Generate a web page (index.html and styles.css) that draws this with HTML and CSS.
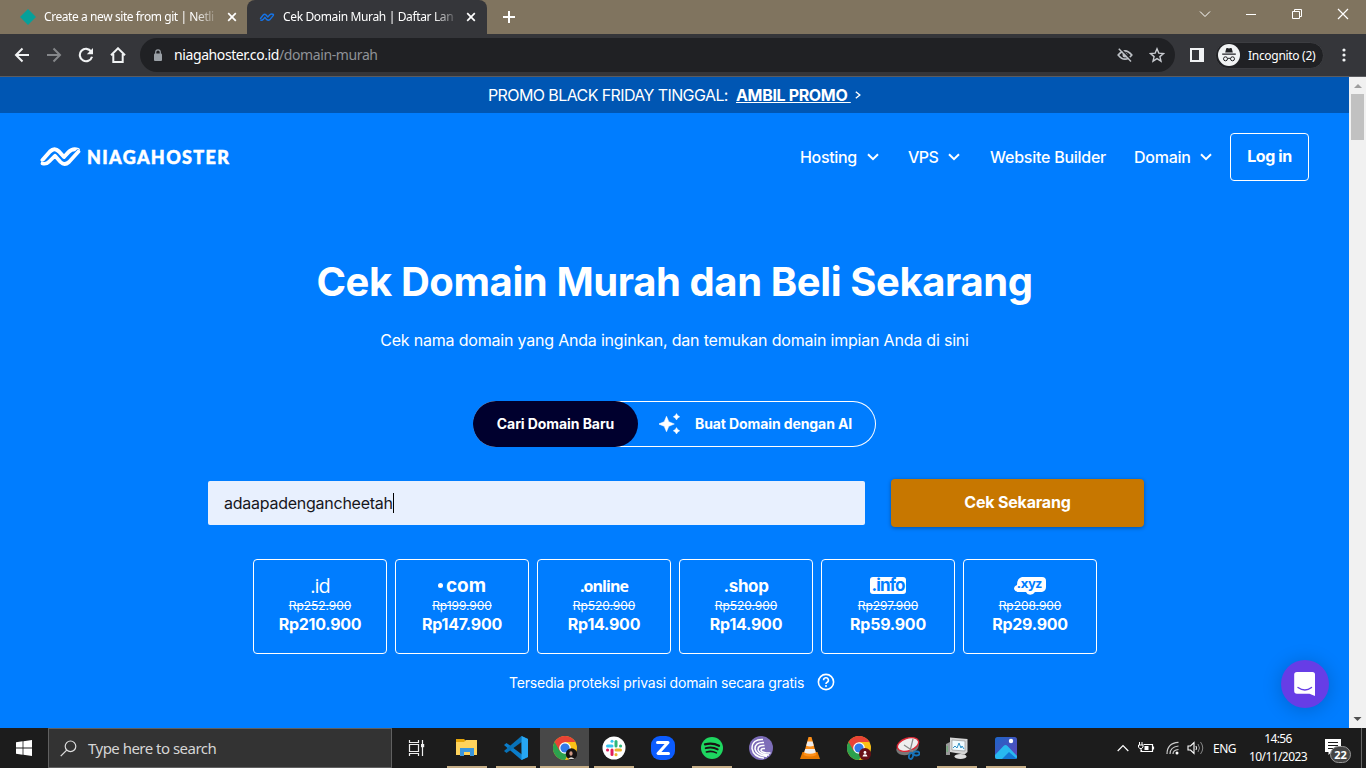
FILE: index.html
```html
<!DOCTYPE html>
<html lang="id">
<head>
<meta charset="utf-8">
<title>Cek Domain Murah | Daftar Langsung</title>
<link rel="stylesheet" href="styles.css">
</head>
<body>
<header class="tabs">
  <div class="tab tab-idle">
    <svg class="fav" width="16" height="16" viewBox="0 0 16 16"><path d="M8 0l8 8-8 8-8-8z" fill="#06a09a"/></svg>
    <span class="tab-title t1">Create a new site from git | Netli</span>
    <svg class="tab-x" width="10" height="10" viewBox="0 0 10 10"><path d="M1.200 1.200l7.600 7.600M8.800 1.200L1.200 8.800" stroke="#fff" stroke-width="1.700"/></svg>
  </div>
  <div class="tab tab-active">
    <svg class="fav" width="16" height="16" viewBox="0 0 16 16"><g fill="none" stroke="#1673e6" stroke-width="1.400" stroke-linecap="round" stroke-linejoin="round"><path d="M1.500 9.500L4.200 6q1.400-1.600 2.900 0l1.700 2 2-2.200q1.500-1.300 3.700-.3"/><path d="M1.800 11.200q1.400.5 2.500-.9L5.800 8.300l1.900 2.300q1.600 1.300 3.200 0l3.500-4.200"/></g></svg>
    <span class="tab-title t2">Cek Domain Murah | Daftar Lang</span>
    <svg class="tab-x" width="10" height="10" viewBox="0 0 10 10"><path d="M1.200 1.200l7.600 7.600M8.800 1.200L1.200 8.800" stroke="#fff" stroke-width="1.700"/></svg>
  </div>
  <svg class="plus" width="12" height="12" viewBox="0 0 12 12"><path d="M6 0v12M0 6h12" stroke="#fff" stroke-width="2"/></svg>
  <div class="win">
    <svg width="12" height="12" viewBox="0 0 12 12"><path d="M1 3.500l5 5 5-5" fill="none" stroke="#fff"/></svg>
    <svg width="12" height="12" viewBox="0 0 12 12"><path d="M1 6.500h10" stroke="#fff"/></svg>
    <svg width="12" height="12" viewBox="0 0 12 12"><path d="M1.500 3.500h7v7h-7zM3.500 3.500v-2h7v7h-2" fill="none" stroke="#fff"/></svg>
    <svg width="12" height="12" viewBox="0 0 12 12"><path d="M1 1l10 10M11 1L1 11" stroke="#fff" stroke-width="1.200"/></svg>
  </div>
</header>
<div class="toolbar">
  <svg class="nav-i" width="16" height="16" viewBox="0 0 16 16"><path d="M15 8H2M8.500 1.500L2 8l6.500 6.500" fill="none" stroke="#f1f3f4" stroke-width="2"/></svg>
  <svg class="nav-i" width="16" height="16" viewBox="0 0 16 16"><path d="M1 8h13M7.500 1.500L14 8l-6.500 6.500" fill="none" stroke="#85878a" stroke-width="2"/></svg>
  <svg class="nav-i" width="16" height="16" viewBox="0 0 16 16"><path d="M13.200 4.600A6.200 6.200 0 1 0 14 9.700" fill="none" stroke="#f1f3f4" stroke-width="2.100"/><path d="M15 1v6.200H8.800z" fill="#f1f3f4"/></svg>
  <svg class="nav-i" width="16" height="16" viewBox="0 0 16 16"><path d="M1 8.200L8 1.300l7 6.900M3.300 7v8h9.400V7" fill="none" stroke="#f1f3f4" stroke-width="2"/></svg>
  <div class="omnibox">
    <svg width="10" height="13" viewBox="0 0 10 13"><rect x="1" y="4.500" width="8" height="7.500" rx="1" fill="#9aa0a6"/><path d="M2.700 5V3.200a2.300 2.300 0 0 1 4.600 0V5" fill="none" stroke="#9aa0a6" stroke-width="1.200"/></svg>
    <span class="url">niagahoster.co.id<i>/domain-murah</i></span>
    <svg class="eye" width="16" height="16" viewBox="0 0 16 16"><path d="M1.200 8Q8-.4 14.800 8 8 16.400 1.200 8z" fill="none" stroke="#bdc1c6" stroke-width="1.700"/><circle cx="8" cy="8" r="2.500" fill="#bdc1c6"/><path d="M3 1l12 12.500" stroke="#202124" stroke-width="1.800"/><path d="M1.800 1.700L14 14.500" stroke="#bdc1c6" stroke-width="1.500"/></svg>
    <svg width="16" height="16" viewBox="0 0 16 16"><path d="M8 1.800l1.800 4.300 4.700.4-3.600 3.100 1.100 4.600L8 11.700l-4 2.500 1.100-4.600-3.600-3.100 4.700-.4z" fill="none" stroke="#c8cbd0" stroke-width="1.400"/></svg>
  </div>
  <svg class="panel-i" width="14" height="14" viewBox="0 0 14 14"><path d="M1 1h12v12H1z" fill="none" stroke="#f1f3f4" stroke-width="2"/><path d="M9 1h4v12H9z" fill="#f1f3f4"/></svg>
  <div class="incog">
    <svg width="22" height="22" viewBox="0 0 22 22"><circle cx="11" cy="11" r="11" fill="#f1f3f4"/><path d="M7.200 8.500l1-4q.3-.8 1.200-.4 1.600.6 3.200 0 .9-.4 1.200.4l1 4zM4.200 9.500h13.600v1.300H4.200z" fill="#202124"/><g fill="none" stroke="#202124"><circle cx="7.500" cy="14.800" r="2"/><circle cx="14.500" cy="14.800" r="2"/><path d="M9.500 14.600q1.500-.8 3 0"/></g></svg>
    <span>Incognito (2)</span>
  </div>
  <svg class="dots" width="4" height="14" viewBox="0 0 4 14" fill="#f1f3f4"><circle cx="2" cy="2" r="1.600"/><circle cx="2" cy="7" r="1.600"/><circle cx="2" cy="12" r="1.600"/></svg>
</div>
<div class="viewport">
  <main class="page">
    <div class="promo"><span class="promo-t">PROMO BLACK FRIDAY TINGGAL:</span><a class="promo-a">AMBIL PROMO&nbsp;</a><svg width="6" height="8" viewBox="0 0 6 8"><path d="M.8.800L4.800 4 .8 7.200" fill="none" stroke="#fff" stroke-width="1.400"/></svg></div>
    <nav class="nav">
      <svg class="mark" width="41" height="20" viewBox="0 0 41 20"><g fill="none" stroke-linecap="round" stroke-linejoin="round"><path d="M2.500 13L10 4.500Q14.500 0 19 4.500L24 10l4.500-4.800Q32.500 1 38 2.800" stroke="#fff" stroke-width="4"/><path d="M3 17q4 .5 6.500-2.500L15 8.500l5.500 6.300q4 4.200 8.500.2L38 5" stroke="#007dff" stroke-width="5.200"/><path d="M2.500 16.500q4 1 6.700-2L15 8.800l5.500 6.200q4 4 8.500 0L38.500 4.500" stroke="#fff" stroke-width="3.700"/></g></svg>
      <span class="brand">NIAGAHOSTER</span>
      <div class="links">
        <span class="lk l1">Hosting</span><svg class="chev c1" width="12" height="8" viewBox="0 0 12 8"><path d="M1 1.200l5 5 5-5"/></svg>
        <span class="lk l2">VPS</span><svg class="chev c2" width="12" height="8" viewBox="0 0 12 8"><path d="M1 1.200l5 5 5-5"/></svg>
        <span class="lk l3">Website Builder</span>
        <span class="lk l4">Domain</span><svg class="chev c4" width="12" height="8" viewBox="0 0 12 8"><path d="M1 1.200l5 5 5-5"/></svg>
        <a class="login">Log in</a>
      </div>
    </nav>
    <h1>Cek Domain Murah dan Beli Sekarang</h1>
    <p class="sub">Cek nama domain yang Anda inginkan, dan temukan domain impian Anda di sini</p>
    <div class="toggle">
      <span class="on">Cari Domain Baru</span>
      <svg width="22" height="22" viewBox="0 0 22 22" fill="#fff"><path d="M7.500 3.200L9.800 8.700 15.300 11 9.800 13.300 7.500 18.800 5.200 13.300-.3 11 5.200 8.700zM17.500.6l1.200 2 2 1.200-2 1.200-1.200 2-1.200-2-2-1.200 2-1.200zM17.500 14.600l1.200 2 2 1.200-2 1.200-1.200 2-1.200-2-2-1.200 2-1.200z" stroke="#fff" stroke-width=".5"/></svg>
      <span class="ai">Buat Domain dengan AI</span>
    </div>
    <div class="search"><div class="field"><span>adaapadengancheetah</span></div><div class="btn"><span>Cek Sekarang</span></div></div>
    <div class="cards">
      <div class="card"><b class="tld id">.id</b><s>Rp252.900</s><strong>Rp210.900</strong></div>
      <div class="card"><b class="tld com"><i></i>com</b><s>Rp199.900</s><strong>Rp147.900</strong></div>
      <div class="card"><b class="tld online">.online</b><s>Rp520.900</s><strong>Rp14.900</strong></div>
      <div class="card"><b class="tld shop">.shop</b><s>Rp520.900</s><strong>Rp14.900</strong></div>
      <div class="card"><b class="tld"><em class="info">.info</em></b><s>Rp297.900</s><strong>Rp59.900</strong></div>
      <div class="card"><b class="tld"><svg width="32" height="20" viewBox="0 0 32 20"><path d="M8 1h20q4 0 4 4v6q0 4-4 5h-7q-2 3-5 2.800-3-.2-4-2.800H5q-4 0-5-3 0-3 3-4 0-7 5-8z" fill="#fff"/><text class="xyz" x="3" y="12">.xyz</text></svg></b><s>Rp208.900</s><strong>Rp29.900</strong></div>
    </div>
    <div class="note"><span>Tersedia proteksi privasi domain secara gratis</span><svg width="18" height="18" viewBox="0 0 18 18"><circle cx="9" cy="9" r="7.600" fill="none" stroke="#fff" stroke-width="1.600"/><path d="M6.600 7.200a2.400 2.400 0 1 1 3.600 2q-1.200.7-1.200 1.800" fill="none" stroke="#fff" stroke-width="1.600"/><circle cx="9" cy="13" r="1" fill="#fff"/></svg></div>
    <div class="chat"><svg width="24" height="26" viewBox="0 0 24 26"><path d="M4 1h15.500q2.500 0 2.500 2.500V25l-5.500-2.200H4Q1.200 22.800 1.200 20V3.500Q1.200 1 4 1z" fill="#fff"/><path d="M5 16.500q7 5 13.500 0" fill="none" stroke="#673de6" stroke-width="1.400" stroke-linecap="round"/></svg></div>
  </main>
  <div class="scroll">
    <svg width="17" height="17" viewBox="0 0 17 17"><path d="M5 11h8L9 7z" fill="#9e9e9e"/></svg>
    <div class="thumb"></div>
    <svg class="down" width="17" height="17" viewBox="0 0 17 17"><path d="M4.500 6h8l-4 4z" fill="#505050"/></svg>
  </div>
</div>
<footer class="task">
  <div class="start"><svg width="16" height="16" viewBox="0 0 16 16" fill="#fff"><path d="M0 2.200l6.600-.9v6.300H0zM7.400 1.200L16 0v7.600H7.400zM0 8.400h6.600v6.300L0 13.800zM7.400 8.400H16V16l-8.600-1.200z"/></svg></div>
  <div class="find"><svg width="17" height="17" viewBox="0 0 17 17"><circle cx="10.500" cy="6.300" r="5.300" fill="none" stroke="#ddd" stroke-width="1.200"/><path d="M6.700 10.100L.7 16.100" stroke="#ddd" stroke-width="1.300"/></svg><span>Type here to search</span></div>
  <div class="view"><svg width="17" height="16" viewBox="0 0 17 16"><path d="M1.500 0v2.500h9V0M1.500 16v-2.500h9V16M1.500 4.500h9v7h-9zM14.500 0v16" fill="none" stroke="#eee" stroke-width="1.200"/><path d="M13 4h3.200v3.200H13z" fill="#eee"/></svg></div>
  <div class="app run"><svg width="24" height="24" viewBox="0 0 24 24"><path d="M1 3h8l2 2h11v14H1z" fill="#e5a50a"/><path d="M1 6h8l2-2h11v15H1z" fill="#ffd35c"/><path d="M5 20v-8h14v8h-4v-4H9v4z" fill="#3a96dd"/></svg></div>
  <div class="app run"><svg width="24" height="24" viewBox="0 0 24 24"><path d="M17.500 0L24 3v18l-6.500 3L0 9l2.500-2L18 18.500z" fill="#0b7dca"/><path d="M17.500 0L0 15l2.500 2L18 5.700z" fill="#0872b8"/><path d="M17.500 0L24 3v18l-6.500 3z" fill="#27a6f2"/></svg></div>
  <div class="app run current"><svg width="24" height="24" viewBox="0 0 24 24"><circle cx="12" cy="12" r="12" fill="#fbc116"/><path d="M12 12L1.600 6A12 12 0 0 0 12 24l5-9z" fill="#2ca14e"/><path d="M1.600 6A12 12 0 0 1 22.400 6H12L6.800 15z" fill="#e94335"/><circle cx="12" cy="12" r="5.800" fill="#fff"/><circle cx="12" cy="12" r="4.600" fill="#3279e9"/><circle cx="18.500" cy="18" r="5.700" fill="#161313"/><ellipse cx="18" cy="17.500" rx="1.600" ry="2.200" fill="#cf9984"/><path d="M15 23q3-3.500 6.500 0z" fill="#e0ddda"/></svg></div>
  <div class="app run"><svg width="24" height="24" viewBox="0 0 24 24"><circle cx="12" cy="12" r="11.500" fill="#fff"/><g fill="none" stroke-width="3" stroke-linecap="round"><path d="M5.500 10h4.500" stroke="#36c5f0"/><path d="M10 5.200v.1" stroke="#36c5f0"/><path d="M14 5.500v4.500" stroke="#2eb67d"/><path d="M18.500 10h.1" stroke="#2eb67d"/><path d="M18.500 14H14" stroke="#ecb22e"/><path d="M14 18.600v.1" stroke="#ecb22e"/><path d="M10 18.500V14" stroke="#e01e5a"/><path d="M5.500 14h.1" stroke="#e01e5a"/></g></svg></div>
  <div class="app"><svg width="24" height="24" viewBox="0 0 24 24"><rect width="24" height="24" rx="9" fill="#0b5cff"/><path d="M6.500 6.500h10.500L7 17.500h10.500" fill="none" stroke="#fff" stroke-width="3" stroke-linejoin="round" stroke-linecap="round"/></svg></div>
  <div class="app run"><svg width="24" height="24" viewBox="0 0 24 24"><circle cx="12" cy="12" r="11" fill="#1ed760"/><g fill="none" stroke="#191414" stroke-linecap="round"><path d="M5 8.300q7.500-2 14 1.400" stroke-width="2.300"/><path d="M5.700 12.200q6.500-1.800 12 1.200" stroke-width="1.900"/><path d="M6.400 15.900q5.500-1.500 10 1" stroke-width="1.600"/></g></svg></div>
  <div class="app"><svg width="24" height="24" viewBox="0 0 24 24"><circle cx="12" cy="12" r="12" fill="#7d6db8"/><g fill="none" stroke="#fff" stroke-width="1.500"><path d="M14 3.500Q3 3 3 12.500q1.500 8.500 12 9.500M15 6.500Q6 6 6 13q1.500 6.500 12 7.500M15.500 9.500q-6.500-.5-6.500 4 1.500 5 11 5.500M16 12.500q-4-.5-4 1.800 1.500 3 9.500 2.700"/></g></svg></div>
  <div class="app"><svg width="24" height="24" viewBox="0 0 24 24"><path d="M4.500 16h15L22 23H2z" fill="#e87900"/><path d="M10.500 1h3l5 18q-6.500 3-13 0z" fill="#ff9019"/><path d="M9.400 5.500h5.200l1.200 4.200q-3.800 1.500-7.600 0zM7.200 13h9.600l1 3.500q-5.800 2.500-11.600 0z" fill="#eee"/></svg></div>
  <div class="app"><svg width="24" height="24" viewBox="0 0 24 24"><circle cx="12" cy="12" r="12" fill="#fbc116"/><path d="M12 12L1.600 6A12 12 0 0 0 12 24l5-9z" fill="#2ca14e"/><path d="M1.600 6A12 12 0 0 1 22.400 6H12L6.800 15z" fill="#e94335"/><circle cx="12" cy="12" r="5.800" fill="#fff"/><circle cx="12" cy="12" r="4.600" fill="#3279e9"/><circle cx="18" cy="18" r="6" fill="#681018"/><circle cx="18" cy="16.500" r="1.400" fill="#fff"/><path d="M15.500 20.500q.3-2.300 2.500-2.300t2.500 2.300z" fill="#fff"/></svg></div>
  <div class="app"><svg width="24" height="24" viewBox="0 0 24 24"><ellipse cx="11.500" cy="11.500" rx="11.500" ry="7.200" transform="rotate(-18 11.500 11.500)" fill="#777"/><ellipse cx="12" cy="8.500" rx="11" ry="6.300" transform="rotate(-18 12 8.500)" fill="#eee" stroke="#dc2634" stroke-width="1.400"/><path d="M8 9l9 6M17 3l-3 12" stroke="#888" stroke-width="1.200"/><g fill="none" stroke="#1673b8" stroke-width="1.800"><ellipse cx="15" cy="20" rx="2" ry="3" transform="rotate(15 15 20)"/><ellipse cx="20.500" cy="17.500" rx="3" ry="2"/></g></svg></div>
  <div class="app run"><svg width="24" height="24" viewBox="0 0 24 24"><path d="M1 8l4-2v13H1z" fill="#999"/><path d="M5 1.500L22.500 3v13l-3 2.500L5 16z" fill="#d5d5d5"/><path d="M7 4l13 1v10L7 14z" fill="#f1fbff" stroke="#888" stroke-width=".6"/><path d="M8 12l2-2 2 2 2-5 2 5 1-2 2 3" fill="none" stroke="#2f92c9"/><ellipse cx="15.500" cy="20.500" rx="6" ry="2.600" fill="#ddd"/><path d="M1.500 10h1.500v6H1.500z" fill="#72a77b"/></svg></div>
  <div class="app run"><svg width="24" height="24" viewBox="0 0 24 24"><defs><linearGradient id="ph" x2="1" y2="1"><stop stop-color="#1d65c8"/><stop offset="1" stop-color="#6247b8"/></linearGradient></defs><rect x="1" y="1" width="22" height="22" rx="2.500" fill="url(#ph)"/><path d="M1 19l8.500-9q2-2 4 0L23 20v1q0 2-2 2H3q-2 0-2-2z" fill="#28baf0"/><path d="M8 23l7-7 8 7z" fill="#1377d4"/><circle cx="17" cy="5" r="2.200" fill="#fff"/></svg></div>
  <div class="tray">
    <svg width="12" height="8" viewBox="0 0 12 8"><path d="M.7 7L6 1.500 11.300 7" fill="none" stroke="#fff" stroke-width="1.200"/></svg>
    <svg class="bat" width="17" height="12" viewBox="0 0 17 12"><path d="M5.500 2.500h9v7H3.500V8M15.500 4.500v3" fill="none" stroke="#fff" stroke-width="1.200"/><path d="M6.500 4h4v4h-4z" fill="#fff"/><path d="M1.500 0v3M4 0v3M.5 3h4.500v2L3.700 6.500h-2L.5 5zM3 6v4" fill="none" stroke="#fff"/></svg>
    <svg class="wifi" width="14" height="14" viewBox="0 0 14 14"><g fill="none" stroke="#ccc" stroke-width="1.200"><path d="M1 13Q1 2 12.500 1.300M4 13q0-7 8.500-8M7 13q0-4 5.500-4.500"/></g><circle cx="11" cy="12" r="1.500" fill="#fff"/></svg>
    <svg class="vol" width="17" height="14" viewBox="0 0 17 14"><path d="M1 5h2.500L7 1.500v11L3.500 9H1z" fill="none" stroke="#fff" stroke-width="1.100"/><path d="M9 5q1 2 0 4" fill="none" stroke="#fff"/><path d="M11 3q3 4 0 8M13.500 1q4.500 6 0 12" fill="none" stroke="#888"/></svg>
    <span class="lang">ENG</span>
    <div class="clock"><span class="time">14:56</span><span class="date">10/11/2023</span></div>
    <div class="notif"><svg width="26" height="26" viewBox="0 0 26 26"><path d="M0 2h16v13H6.500L3.500 18v-3H0z" fill="#fff"/><path d="M3 5.500h10M3 8.500h10M3 11.500h6" stroke="#1c1c1c"/><rect x="5.500" y="9.500" width="20" height="16" rx="8" fill="#444" stroke="#999"/><text class="count" x="15.500" y="21.500" text-anchor="middle">22</text></svg></div>
    <div class="peek"></div>
  </div>
</footer>
</body>
</html>
```
FILE: styles.css
```css
*{box-sizing:border-box}
body{margin:0;width:1366px;height:768px;overflow:hidden;font-family:Inter,"Noto Sans",sans-serif;color:#fff;background:#007dff}
svg{display:block;flex:none}
span,a,s,strong{white-space:nowrap}

.tabs{height:34px;display:flex;background:#80745f;font-family:"Noto Sans",sans-serif;font-size:12px}
.tab{display:flex;align-items:center;flex:none}
.tab-idle{width:247px;padding-left:20px}
.tab-active{width:240px;padding-left:12px;background:#35363a;border-radius:8px 8px 0 0}
.tab-title{margin-left:8px;margin-right:12px;line-height:18px;-webkit-mask-image:linear-gradient(90deg,#000 88%,#0003)}
.t1{width:171px;letter-spacing:-.42px}
.t2{width:171px;letter-spacing:-.36px}
.plus{margin:11px 0 0 16px}
.win{margin-left:auto;display:flex;gap:34px;padding:8px 17px 0 0}

.toolbar{height:43px;display:flex;align-items:center;background:#35363a;border-bottom:1px solid #5b5c60;padding-left:14px;font-family:"Noto Sans",sans-serif}
.nav-i{margin-right:16px}
.omnibox{width:1035px;height:34px;margin-left:-2px;border-radius:17px;background:#202124;display:flex;align-items:center;padding:0 10px 0 13px}
.url{font-size:14px;letter-spacing:-.4px;margin-left:11px;padding-bottom:1px}
.url i{font-style:normal;color:#8f9297}
.eye{margin-left:auto;margin-right:16px}
.panel-i{margin-left:15px}
.incog{display:flex;align-items:center;gap:8px;width:109px;height:27px;margin-left:11px;border-radius:14px;background:#202124;border:1px solid #3c3d41;padding-left:2px;font-size:12px;letter-spacing:-.3px}
.dots{margin-left:18px}

.viewport{height:651px;display:flex}
.page{width:1349px;background:#007dff;position:relative}
.scroll{width:17px;background:#f1f1f1;display:flex;flex-direction:column}
.thumb{width:13px;height:46px;margin-left:2px;background:#c1c1c1}
.down{margin-top:auto}

.promo{height:36px;background:#0056b3;display:flex;align-items:center;padding:0 0 1px 488px;font-size:16px}
.promo-t{letter-spacing:-.6px;width:248px}
.promo-a{font-weight:700;text-decoration:underline;letter-spacing:-.35px;width:119px}
.nav{height:88px;display:flex;align-items:center;padding:0 40px}
.brand{font-family:Lato,sans-serif;font-weight:900;font-size:18px;letter-spacing:1.35px;margin-left:6px;-webkit-text-stroke:.5px #fff}
.links{margin-left:auto;display:flex;align-items:center;font-size:16px}
.chev{fill:none;stroke:#fff;stroke-width:2}
.lk{font-weight:500;letter-spacing:-.25px;padding-bottom:1px}
.l1{width:67px;letter-spacing:-.35px}.c1{margin-right:29px}
.l2{width:40px;letter-spacing:-.6px}.c2{margin-right:30px}
.l3{width:144px}.l4{width:66px}.c4{margin-right:18px}
.login{width:79px;height:48px;border:1px solid #fff;border-radius:4px;font-weight:700;line-height:45px;text-align:center;letter-spacing:-.4px}
h1{margin:56px 0 0;text-align:center;font-size:40px;line-height:50px;font-weight:700;letter-spacing:-.4px;white-space:nowrap}
.sub{margin:21px 0 0;text-align:center;font-size:16px;line-height:24px;letter-spacing:-.2px}
.toggle{width:403px;height:46px;margin:49px 0 0 473px;border:1px solid #fff;border-left:0;border-radius:23px;display:flex;align-items:center;font-size:14px;font-weight:700}
.on{width:165px;height:46px;margin:-1px 21px 0 0;border-radius:23px;background:#00002e;line-height:46px;text-align:center;letter-spacing:-.08px}
.ai{margin-left:14px;padding-bottom:1px;letter-spacing:-.1px}
.search{display:flex;align-items:center;margin:32px 0 0 208px;height:48px}
.field{width:657px;height:44px;background:#e8f0fe;color:#17171c;border-radius:2px;padding:0 0 1px 16px;display:flex;align-items:center;font-size:16px;letter-spacing:-.25px}
.field span{border-right:1px solid #000;line-height:20px}
.btn{width:253px;height:48px;margin-left:26px;background:#c77700;border-radius:4px;text-align:center;line-height:47px;font-weight:700;font-size:16px;letter-spacing:-.2px;box-shadow:0 1px 4px #0005}
.cards{display:flex;gap:8px;margin:32px 0 0 253px}
.card{width:134px;height:95px;border:1px solid #fff;border-radius:4px;display:flex;flex-direction:column;align-items:center;padding-top:13px}
.tld{height:25px;display:flex;align-items:center;justify-content:center;line-height:24px;font-weight:700}
.id{font-family:"Open Sans",sans-serif;font-weight:400;font-size:20px;letter-spacing:-1px}
.com{font-size:19px}
.com i{width:5px;height:5px;border-radius:50%;background:#fff;margin-right:3px}
.online{font-family:"Open Sans",sans-serif;font-size:16px;letter-spacing:-.95px}
.shop{font-size:17px;letter-spacing:-.4px}
.info{font-style:normal;background:#fff;color:#007dff;border-radius:3px;width:36px;height:17px;line-height:17px;text-align:center;font-size:17px;letter-spacing:-.9px}
.xyz{font:700 13px "Noto Sans",sans-serif;fill:#007dff}
.card s{font-size:12px;line-height:16px;letter-spacing:-.05px}
.card strong{font-size:16px;line-height:21px;letter-spacing:-.25px}
.note{display:flex;align-items:center;margin:16px 0 0 509px;height:24px;font-size:14px}
.note span{width:308px;letter-spacing:-.19px}
.chat{position:absolute;left:1281px;top:583px;width:48px;height:48px;border-radius:50%;background:#673de6;display:flex;align-items:center;justify-content:center;box-shadow:0 2px 20px #0003}

.task{height:40px;background:#1c1c1c;display:flex;font-family:"Noto Sans",sans-serif}
.start{width:48px;display:flex;align-items:center;justify-content:center}
.find{width:344px;border:1px solid #606060;background:#333;display:flex;align-items:center;padding-left:11px;font-size:15px;color:#d6d6d6}
.find span{margin-left:11px;letter-spacing:-.52px}
.view{width:50px;padding-right:2px;display:flex;align-items:center;justify-content:center}
.app{width:49px;display:flex;align-items:center;justify-content:center}
.run{background:linear-gradient(#c7af88,#c7af88) center bottom/40px 2px no-repeat}
.current{background-color:#484848;background-size:49px 2px}
.tray{margin-left:auto;width:249px;display:flex;align-items:center;font-size:12px}
.bat{margin-left:9px}.wifi{margin-left:11px}.vol{margin-left:7px}
.lang{margin-left:9px;width:31px;letter-spacing:-.5px}
.clock{width:68px;margin-left:0;display:flex;flex-direction:column;align-items:center;line-height:18px}
.date,.time{letter-spacing:-.6px}
.notif{margin-left:13px;padding-top:3px}
.peek{width:1px;height:40px;margin-left:10px;background:#666}
.count{font:700 11px "Noto Sans",sans-serif;fill:#fff}
```
